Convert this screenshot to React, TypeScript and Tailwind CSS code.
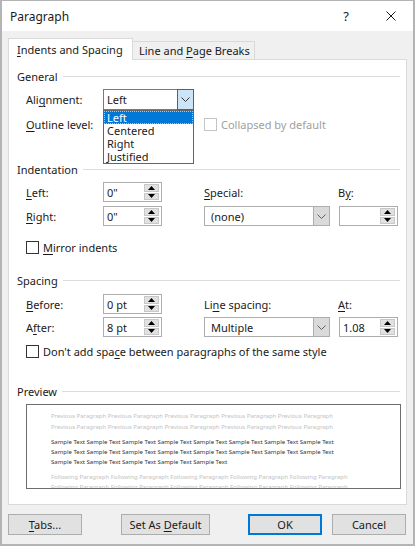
import type React from "react";

const font = { fontFamily: '"Noto Sans", "Liberation Sans", sans-serif' };

function K({ children }: { children: React.ReactNode }) {
  return <span className="underline underline-offset-[2px] decoration-[1px]">{children}</span>;
}

function Heading({ children }: { children: React.ReactNode }) {
  return (
    <div className="flex items-center h-[16px] pl-[8px] pr-[6px]">
      <span className="text-[#1a1a1a]">{children}</span>
      <div className="flex-1 h-px bg-[#dcdcdc] ml-[5px]" />
    </div>
  );
}

function Checkbox({ disabled }: { disabled?: boolean }) {
  return (
    <div
      className={
        "w-[13px] h-[13px] bg-white border shrink-0 " +
        (disabled ? "border-[#c4c4c4]" : "border-[#333333]")
      }
    />
  );
}

function Spin({ value }: { value: string }) {
  return (
    <div className="flex w-[59px] h-[20px] border border-[#adadad] bg-white">
      <div className="flex-1 flex items-center pl-[3px] text-[#1a1a1a]">{value}</div>
      <div className="flex flex-col w-[15px] py-[1px] mr-[2px] gap-px">
        <div className="flex-1 bg-[#e1e1e1] border border-[#c8c8c8] flex items-center justify-center">
          <svg width="7" height="4" viewBox="0 0 7 4">
            <polygon points="3.5,0 7,4 0,4" fill="#000" />
          </svg>
        </div>
        <div className="flex-1 bg-[#e1e1e1] border border-[#c8c8c8] flex items-center justify-center">
          <svg width="7" height="4" viewBox="0 0 7 4">
            <polygon points="0,0 7,0 3.5,4" fill="#000" />
          </svg>
        </div>
      </div>
    </div>
  );
}

function Chevron({ color }: { color: string }) {
  return (
    <svg width="9" height="5" viewBox="0 0 9 5">
      <polyline points="0.5,0.5 4.5,4.5 8.5,0.5" fill="none" stroke={color} strokeWidth="1" />
    </svg>
  );
}

function Combo({ value }: { value: string }) {
  return (
    <div className="flex w-[126px] h-[20px] border border-[#adadad] bg-white">
      <div className="flex-1 flex items-center pl-[6px] text-[#1a1a1a]">{value}</div>
      <div className="w-[17px] -my-px -mr-px bg-[#dadada] border border-[#adadad] flex items-center justify-center">
        <Chevron color="#606060" />
      </div>
    </div>
  );
}

function Button({ children, primary, w }: { children: React.ReactNode; primary?: boolean; w: string }) {
  return (
    <div
      className={
        "h-[21px] flex items-center justify-center bg-[#e1e1e1] text-[#1a1a1a] whitespace-nowrap " +
        w +
        (primary ? " border-2 border-[#0078d7]" : " border border-[#adadad]")
      }
    >
      <span>{children}</span>
    </div>
  );
}

const rep = (s: string, n: number) => Array(n).fill(s).join(" ");

export default function App() {
  return (
    <div
      className="w-[415px] h-[546px] bg-[#f0f0f0] border-x-2 border-t border-b-2 border-[#b4b4b4] flex flex-col text-[11px] leading-[15px] overflow-hidden"
      style={font}
    >
      {/* Title bar */}
      <div className="h-[30px] bg-white flex items-center pl-[8px] shrink-0 text-[12px]">
        <span className="text-[#1a1a1a]">Paragraph</span>
        <span className="ml-auto text-[#1a1a1a] text-[13px]">?</span>
        <div className="ml-[37px] mr-[17px] w-[10px] h-[10px]">
          <svg width="10" height="10" viewBox="0 0 10 10">
            <path d="M0.5 0.5L9.5 9.5M9.5 0.5L0.5 9.5" stroke="#1a1a1a" strokeWidth="1" />
          </svg>
        </div>
      </div>

      <div className="px-[6px] flex flex-col">
        {/* Tabs */}
        <div className="flex items-end h-[21px] mt-[7px] whitespace-nowrap">
          <div className="relative z-10 -mb-px h-[22px] w-[125px] bg-white border border-b-0 border-[#d9d9d9] flex items-center pl-[8px] text-[#1a1a1a]">
            <span>
              <K>I</K>ndents and Spacing
            </span>
          </div>
          <div className="h-[18px] w-[122px] bg-[#f0f0f0] border border-b-0 border-l-0 border-[#d9d9d9] flex items-center pl-[6px] text-[#1a1a1a]">
            <span>
              Line and <K>P</K>age Breaks
            </span>
          </div>
        </div>

        {/* Panel */}
        <div className="h-[446px] bg-white border border-[#d9d9d9] flex flex-col text-[#1a1a1a] whitespace-nowrap">
          <div className="mt-[8px]">
            <Heading>General</Heading>
          </div>

          <div className="relative flex items-center mt-[5px] pl-[17px] h-[21px]">
            <div className="w-[77px]">
              Ali<K>g</K>nment:
            </div>
            <div className="relative w-[91px] h-[21px] border border-[#7a7a7a] bg-white flex">
              <div className="flex-1 flex items-center pl-[3px]">Left</div>
              <div className="w-[17px] -my-px -mr-px bg-[#cce4f7] border border-[#0078d7] flex items-center justify-center">
                <Chevron color="#333333" />
              </div>
              {/* Open list */}
              <div className="absolute left-[-1px] top-[20px] w-[91px] bg-white border border-[#646464] z-20 flex flex-col leading-[13px]">
                <div className="h-[13px] bg-[#0078d7] text-white pl-[2px] border border-dotted border-[#f5b86a] flex items-center">
                  Left
                </div>
                <div className="h-[13px] pl-[3px] flex items-center">Centered</div>
                <div className="h-[13px] pl-[3px] flex items-center">Right</div>
                <div className="h-[13px] pl-[3px] flex items-center">Justified</div>
              </div>
            </div>
          </div>

          <div className="flex items-center mt-[7px] pl-[17px] h-[14px]">
            <div className="w-[178px]">
              <K>O</K>utline level:
            </div>
            <Checkbox disabled />
            <span className="ml-[4px] text-[#a0a0a0]">Collapsed by default</span>
          </div>

          <div className="mt-[30px]">
            <Heading>Indentation</Heading>
          </div>

          <div className="flex items-center mt-[5px] pl-[17px] h-[20px]">
            <div className="w-[77px]">
              <K>L</K>eft:
            </div>
            <Spin value={'0"'} />
            <div className="ml-[42px] w-[134px]">
              <K>S</K>pecial:
            </div>
            <div>
              B<K>y</K>:
            </div>
          </div>

          <div className="flex items-center mt-[4px] pl-[17px] h-[20px]">
            <div className="w-[77px]">
              <K>R</K>ight:
            </div>
            <Spin value={'0"'} />
            <div className="ml-[42px]">
              <Combo value="(none)" />
            </div>
            <div className="ml-[9px]">
              <Spin value="" />
            </div>
          </div>

          <div className="flex items-center mt-[14px] pl-[17px] h-[14px]">
            <Checkbox />
            <span className="ml-[4px]">
              <K>M</K>irror indents
            </span>
          </div>

          <div className="mt-[18px]">
            <Heading>Spacing</Heading>
          </div>

          <div className="flex items-center mt-[6px] pl-[17px] h-[20px]">
            <div className="w-[77px]">
              <K>B</K>efore:
            </div>
            <Spin value="0 pt" />
            <div className="ml-[42px] w-[134px]">
              Li<K>n</K>e spacing:
            </div>
            <div>
              <K>A</K>t:
            </div>
          </div>

          <div className="flex items-center mt-[3px] pl-[17px] h-[20px]">
            <div className="w-[77px]">
              A<K>f</K>ter:
            </div>
            <Spin value="8 pt" />
            <div className="ml-[42px]">
              <Combo value="Multiple" />
            </div>
            <div className="ml-[9px]">
              <Spin value="1.08" />
            </div>
          </div>

          <div className="flex items-center mt-[7px] pl-[17px] h-[14px]">
            <Checkbox />
            <span className="ml-[4px]">
              Don't add spa<K>c</K>e between paragraphs of the same style
            </span>
          </div>

          <div className="mt-[25px]">
            <Heading>Preview</Heading>
          </div>

          <div className="ml-[17px] mr-[5px] mt-[5px] h-[85px] border border-[#6e6e6e] bg-white overflow-hidden pl-[24px] pt-[6px] text-[6px]">
            <div className="leading-[11px] text-[#c2c2c2]">
              <div>{rep("Previous Paragraph", 5)}</div>
              <div>{rep("Previous Paragraph", 5)}</div>
            </div>
            <div className="leading-[10px] text-[#333333] mt-[4px]">
              <div>{rep("Sample Text", 8)}</div>
              <div>{rep("Sample Text", 8)}</div>
              <div>{rep("Sample Text", 5)}</div>
            </div>
            <div className="leading-[10px] text-[#c2c2c2] mt-[5px]">
              <div>{rep("Following Paragraph", 5)}</div>
              <div>{rep("Following Paragraph", 5)}</div>
            </div>
          </div>
        </div>

        {/* Buttons */}
        <div className="flex mt-[9px]">
          <Button w="w-[74px]">
            <K>T</K>abs...
          </Button>
          <div className="ml-[39px]">
            <Button w="w-[89px]">
              Set As <K>D</K>efault
            </Button>
          </div>
          <div className="ml-[38px]">
            <Button w="w-[74px]" primary>
              OK
            </Button>
          </div>
          <div className="ml-[10px]">
            <Button w="w-[74px]">Cancel</Button>
          </div>
        </div>
      </div>
    </div>
  );
}
